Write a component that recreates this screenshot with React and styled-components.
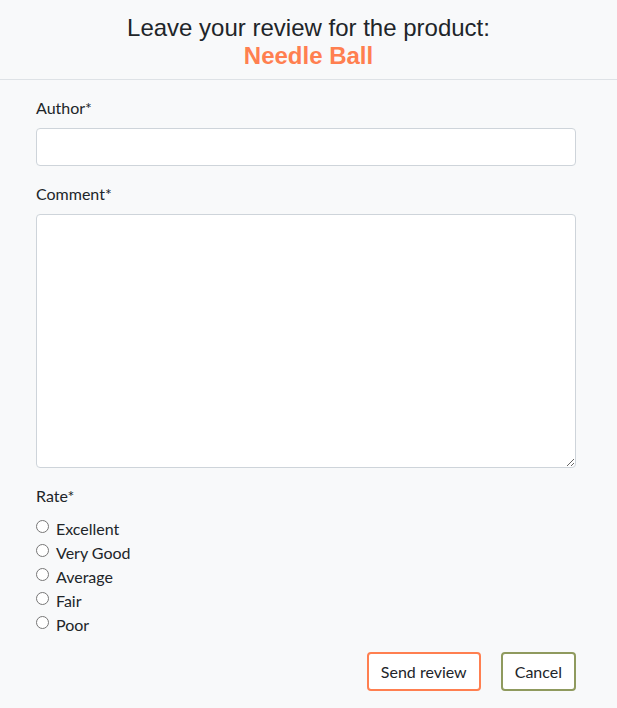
import React from 'react';
import styled, { createGlobalStyle } from 'styled-components';

const GlobalStyle = createGlobalStyle`
  body {
    margin: 0;
    background: #f8f9fa;
    font-family: Lato, "Liberation Sans", sans-serif;
    color: #212529;
  }
`;

const Header = styled.header`
  border-bottom: 1px solid #dee2e6;
  padding: 14px 0 9px;
  text-align: center;
  font-family: "Liberation Sans", Arial, sans-serif;
  font-size: 24px;
  line-height: 28px;
  color: #212529;
`;

const Product = styled.div`
  color: #ff7f50;
  font-weight: bold;
`;

const Form = styled.form`
  width: 540px;
  margin-left: 36px;
  padding-top: 17px;
`;

const Field = styled.div`
  margin-bottom: 17px;
`;

const Label = styled.label`
  display: block;
  font-size: 16px;
  line-height: 22px;
  margin-bottom: 9px;
`;

const Input = styled.input`
  display: block;
  box-sizing: border-box;
  width: 100%;
  height: 38px;
  border: 1px solid #ced4da;
  border-radius: 4px;
  background: #fff;
`;

const TextArea = styled.textarea`
  display: block;
  box-sizing: border-box;
  width: 100%;
  height: 254px;
  border: 1px solid #ced4da;
  border-radius: 4px;
  background: #fff;
`;

const Options = styled.div`
  display: flex;
  flex-direction: column;
`;

const Option = styled.label`
  display: flex;
  align-items: center;
  height: 24px;
  font-size: 16px;
  input {
    margin: 0 7px 3px 0;
    width: 13px;
    height: 13px;
  }
`;

const Actions = styled.div`
  display: flex;
  justify-content: flex-end;
  gap: 20px;
  margin-top: -1px;
`;

const Button = styled.button`
  font-family: Lato, sans-serif;
  font-size: 16px;
  color: #212529;
  background: #fff;
  border: 2px solid ${(p) => p.$border};
  border-radius: 4px;
  height: 39px;
  padding: 0 12px;
`;

const rates = ['Excellent', 'Very Good', 'Average', 'Fair', 'Poor'];

export default function App() {
  return (
    <>
      <GlobalStyle />
      <Header>
        <div>Leave your review for the product:</div>
        <Product>Needle Ball</Product>
      </Header>
      <Form onSubmit={(e) => e.preventDefault()}>
        <Field>
          <Label>Author*</Label>
          <Input type="text" />
        </Field>
        <Field>
          <Label>Comment*</Label>
          <TextArea />
        </Field>
        <Field>
          <Label>Rate*</Label>
          <Options>
            {rates.map((r) => (
              <Option key={r}>
                <input type="radio" name="rate" value={r} />
                {r}
              </Option>
            ))}
          </Options>
        </Field>
        <Actions>
          <Button type="submit" $border="#ff7f50">Send review</Button>
          <Button type="button" $border="#8f9a5e">Cancel</Button>
        </Actions>
      </Form>
    </>
  );
}
